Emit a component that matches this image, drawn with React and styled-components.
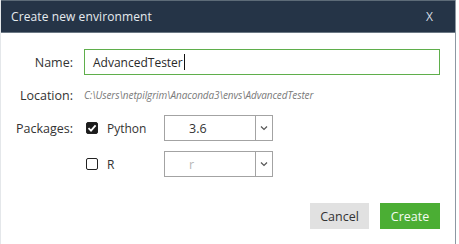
import styled, { createGlobalStyle } from "styled-components";

const GlobalStyle = createGlobalStyle`
    body {
        margin: 0;
        background-color: #ffffff;
        font-family: "Open Sans", "Noto Sans", sans-serif;
    }
`;

export default function App() {
    return (
        <>
            <GlobalStyle />
            <Dialog>
                <Header>
                    <h1>Create new environment</h1>
                    <Close>X</Close>
                </Header>
                <Body>
                    <Row height={26}>
                        <Label>Name:</Label>
                        <Field>
                            AdvancedTester<Caret />
                        </Field>
                    </Row>
                    <Row height={20}>
                        <Label>Location:</Label>
                        <Path>C:\Users\netpilgrim\Anaconda3\envs\AdvancedTester</Path>
                    </Row>
                    <Row height={26}>
                        <Label>Packages:</Label>
                        <Package name="Python" checked={true} version="3.6" />
                    </Row>
                    <Row height={26}>
                        <Label />
                        <Package name="R" checked={false} version="r" />
                    </Row>
                    <Footer>
                        <Button kind="cancel">Cancel</Button>
                        <Button kind="create">Create</Button>
                    </Footer>
                </Body>
            </Dialog>
        </>
    );
}

function Package({ name, checked, version }) {
    return (
        <>
            <Check>
                <CheckBox checked={checked}>
                    {checked ? (
                        <svg width="10" height="10" viewBox="0 0 10 10">
                            <path d="M1.5 5.2 L4 7.6 L8.6 2.4" stroke="#ffffff" strokeWidth="1.8" fill="none" />
                        </svg>
                    ) : null}
                </CheckBox>
                <span>{name}</span>
            </Check>
            <Select disabled={!checked}>
                <span>{version}</span>
                <Arrow>
                    <svg width="8" height="6" viewBox="0 0 8 6">
                        <path d="M1 1.5 L4 4.5 L7 1.5" stroke="#555555" strokeWidth="1.2" fill="none" />
                    </svg>
                </Arrow>
            </Select>
        </>
    );
}

const Dialog = styled.div`
    width: 456px;
    height: 244px;
    box-sizing: border-box;
    border-right: 1px solid #8d98a2;
    border-left: 1px solid #e4e7ea;
    background-color: #ffffff;
    display: flex;
    flex-direction: column;
`;

const Header = styled.div`
    height: 33px;
    background-color: #253447;
    border-top: 1px solid #5d6b78;
    border-bottom: 1px solid #6b7884;
    box-sizing: border-box;
    display: flex;
    align-items: center;
    justify-content: space-between;
    padding: 0 22px 0 10px;

    h1 {
        margin: 0;
        font-size: 12px;
        font-weight: 400;
        color: #e6ebef;
        letter-spacing: 0.1px;
    }
`;

const Close = styled.span`
    font-size: 12px;
    color: #d6dde3;
`;

const Body = styled.div`
    display: flex;
    flex-direction: column;
    gap: 10px;
    padding: 16px 15px 0 0;
`;

const Row = styled.div`
    display: flex;
    align-items: center;
    height: ${props => props.height}px;
`;

const Label = styled.div`
    width: 72px;
    margin-right: 11px;
    text-align: right;
    font-size: 12.5px;
    color: #333333;
    flex-shrink: 0;
`;

const Field = styled.div`
    flex: 1;
    height: 26px;
    box-sizing: border-box;
    border: 1px solid #5fae4b;
    display: flex;
    align-items: center;
    padding-left: 8px;
    font-size: 12px;
    color: #2a2a2a;
`;

const Caret = styled.span`
    display: inline-block;
    width: 1px;
    height: 16px;
    background-color: #111111;
    margin-left: 1px;
`;

const Path = styled.div`
    font-size: 10px;
    font-style: italic;
    color: #7a7a7a;
    letter-spacing: -0.1px;
`;

const Check = styled.div`
    width: 80px;
    display: flex;
    align-items: center;
    gap: 9px;
    padding-left: 2px;
    box-sizing: border-box;
    font-size: 12px;
    color: #333333;
`;

const CheckBox = styled.div`
    width: 12px;
    height: 12px;
    box-sizing: border-box;
    border: 1.5px solid #222222;
    border-radius: 2px;
    background-color: ${props => props.checked ? "#1c1c1c" : "#ffffff"};
    display: flex;
    align-items: center;
    justify-content: center;
`;

const Select = styled.div`
    width: 109px;
    height: 100%;
    box-sizing: border-box;
    border: 1px solid #a3a3a3;
    display: flex;
    align-items: center;
    justify-content: space-between;
    font-size: 12.5px;
    color: ${props => props.disabled ? "#b8b8b8" : "#333333"};

    span {
        padding-left: 24px;
    }
`;

const Arrow = styled.div`
    width: 16px;
    height: 100%;
    border-left: 1px solid #a3a3a3;
    display: flex;
    align-items: center;
    justify-content: center;
`;

const Footer = styled.div`
    display: flex;
    justify-content: flex-end;
    gap: 11px;
    margin-top: 16px;
`;

const Button = styled.button`
    font-family: "Open Sans", "Noto Sans", sans-serif;
    height: 26px;
    width: ${props => props.kind === "create" ? 60 : 59}px;
    border: none;
    font-size: 12.5px;
    padding: 0;
    color: ${props => props.kind === "create" ? "#f4fbf2" : "#333333"};
    background-color: ${props => props.kind === "create" ? "#4bae34" : "#e1e1e1"};
`;
